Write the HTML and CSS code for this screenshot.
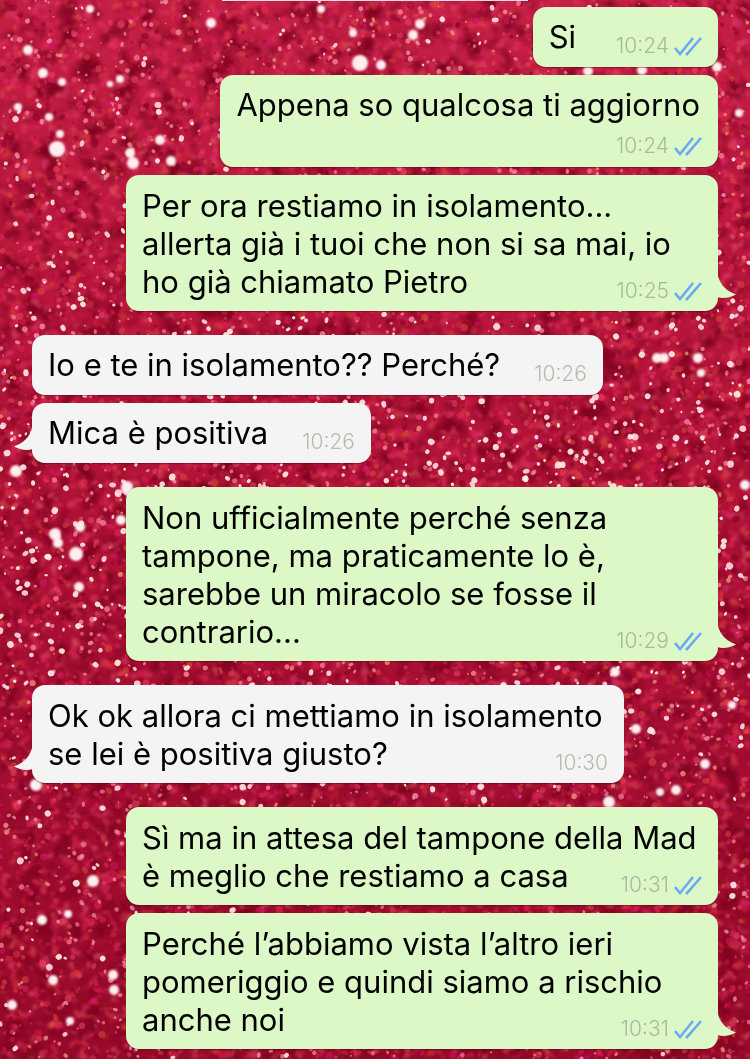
FILE: index.html
```html
<!DOCTYPE html>
<html lang="it">
<head>
   <meta charset="UTF-8">
   <meta name="viewport" content="width=device-width, initial-scale=1">
   <title>Chat</title>
   <link rel="stylesheet" href="styles.css">
</head>
<body>

   <!-- Glitter wallpaper -->
   <svg class="wallpaper" viewBox="0 0 750 1059" preserveAspectRatio="xMidYMid slice" aria-hidden="true">
      <defs>
         <linearGradient id="base" x1="0" y1="0" x2="0" y2="1">
            <stop offset="0" stop-color="#c41f45"/>
            <stop offset="0.3" stop-color="#b8163b"/>
            <stop offset="0.65" stop-color="#a80f33"/>
            <stop offset="1" stop-color="#980a2a"/>
         </linearGradient>
         <filter id="dark" x="0" y="0" width="100%" height="100%" color-interpolation-filters="sRGB">
            <feTurbulence type="fractalNoise" baseFrequency="0.05" numOctaves="3" seed="4"/>
            <feColorMatrix values="0 0 0 0 0.5  0 0 0 0 0.01  0 0 0 0 0.12  3 0 0 0 -1.3"/>
            <feGaussianBlur stdDeviation="1.5"/>
         </filter>
         <filter id="red" x="0" y="0" width="100%" height="100%" color-interpolation-filters="sRGB">
            <feTurbulence type="fractalNoise" baseFrequency="0.1" numOctaves="2" seed="11"/>
            <feColorMatrix values="0 0 0 0 0.93  0 0.5 0 0 0.02  0 0 0.7 0 0.04  5 0 0 0 -2.6"/>
            <feGaussianBlur stdDeviation="1.2"/>
         </filter>
         <filter id="soft" x="-20%" y="-20%" width="140%" height="140%"><feGaussianBlur stdDeviation="1"/></filter>
         <filter id="grain" x="0" y="0" width="100%" height="100%"><feGaussianBlur stdDeviation="0.6"/></filter>
      </defs>
      <rect width="750" height="1059" fill="url(#base)"/>
      <rect width="750" height="1059" filter="url(#dark)"/>
      <rect width="750" height="1059" filter="url(#red)" opacity="0.5"/>
      <!-- Small grains, filled in by glitter.js -->
      <g id="grains" filter="url(#grain)"></g>
      <!-- Larger sparkles -->
      <g fill="#ffeef0" filter="url(#soft)">
         <circle cx="57" cy="149" r="8"/><circle cx="60" cy="134" r="4"/><circle cx="43" cy="73" r="5"/>
         <circle cx="62" cy="82" r="4"/><circle cx="28" cy="50" r="5"/><circle cx="90" cy="9" r="4"/>
         <circle cx="49" cy="117" r="4"/><circle cx="18" cy="107" r="4"/><circle cx="130" cy="153" r="5"/>
         <circle cx="133" cy="163" r="6"/><circle cx="160" cy="140" r="5"/><circle cx="171" cy="161" r="5"/>
         <circle cx="110" cy="84" r="3"/><circle cx="120" cy="79" r="4"/><circle cx="211" cy="23" r="5"/>
         <circle cx="360" cy="63" r="8"/><circle cx="381" cy="65" r="5"/><circle cx="413" cy="35" r="5"/>
         <circle cx="420" cy="24" r="5"/><circle cx="353" cy="33" r="4"/><circle cx="321" cy="9" r="4"/>
         <circle cx="717" cy="67" r="5"/><circle cx="739" cy="113" r="4"/><circle cx="642" cy="70" r="5"/>
         <circle cx="588" cy="71" r="5"/><circle cx="55" cy="534" r="6"/><circle cx="58" cy="543" r="5"/>
         <circle cx="76" cy="554" r="7"/><circle cx="80" cy="527" r="5"/><circle cx="121" cy="520" r="5"/>
         <circle cx="16" cy="471" r="6"/><circle cx="127" cy="487" r="6"/><circle cx="79" cy="587" r="5"/>
         <circle cx="657" cy="358" r="5"/><circle cx="664" cy="358" r="5"/><circle cx="698" cy="358" r="5"/>
         <circle cx="701" cy="373" r="4"/><circle cx="745" cy="485" r="5"/><circle cx="36" cy="785" r="6"/>
         <circle cx="636" cy="729" r="5"/><circle cx="705" cy="764" r="5"/><circle cx="676" cy="790" r="5"/>
         <circle cx="660" cy="792" r="4"/><circle cx="609" cy="802" r="6"/><circle cx="732" cy="705" r="4"/>
         <circle cx="93" cy="881" r="6"/><circle cx="68" cy="914" r="4"/><circle cx="42" cy="920" r="5"/>
         <circle cx="113" cy="975" r="5"/><circle cx="114" cy="990" r="5"/><circle cx="53" cy="980" r="5"/>
         <circle cx="12" cy="1005" r="5"/><circle cx="70" cy="1021" r="4"/><circle cx="615" cy="672" r="5"/>
      </g>
   </svg>

   <!-- Shared shapes -->
   <svg class="shapes" aria-hidden="true">
      <symbol id="ticks" viewBox="0 0 28 19">
         <path d="M1 11l5 6L19 1M12 16l1 1L27 1" fill="none" stroke="#6aa9f4" stroke-width="2.6"/>
      </symbol>
      <symbol id="tail" viewBox="0 0 19 30">
         <path d="M0 0c1 12 7 20 18 24c1 1 1 1 0 1c-6 3-12 4-18 2z"/>
      </symbol>
   </svg>

   <main class="chat">
      <div class="date-pill"></div>

      <div class="message sent">
         <p>Si</p>
         <div class="meta"><time>10:24</time><svg class="ticks"><use href="#ticks"/></svg></div>
      </div>
      <div class="message sent stacked">
         <p>Appena so qualcosa ti aggiorno</p>
         <div class="meta"><time>10:24</time><svg class="ticks"><use href="#ticks"/></svg></div>
      </div>
      <div class="message sent long last">
         <p>Per ora restiamo in isolamento...<br>allerta già i tuoi che non si sa mai, io<br>ho già chiamato Pietro</p>
         <div class="meta"><time>10:25</time><svg class="ticks"><use href="#ticks"/></svg></div>
         <svg class="tail"><use href="#tail"/></svg>
      </div>

      <div class="message received">
         <p>Io e te in isolamento?? Perché?</p>
         <div class="meta"><time>10:26</time></div>
      </div>
      <div class="message received last">
         <p>Mica è positiva</p>
         <div class="meta"><time>10:26</time></div>
         <svg class="tail"><use href="#tail"/></svg>
      </div>

      <div class="message sent long last">
         <p>Non ufficialmente perché senza<br>tampone, ma praticamente lo è,<br>sarebbe un miracolo se fosse il<br>contrario...</p>
         <div class="meta"><time>10:29</time><svg class="ticks"><use href="#ticks"/></svg></div>
         <svg class="tail"><use href="#tail"/></svg>
      </div>

      <div class="message received long last">
         <p>Ok ok allora ci mettiamo in isolamento<br>se lei è positiva giusto?</p>
         <div class="meta"><time>10:30</time></div>
         <svg class="tail"><use href="#tail"/></svg>
      </div>

      <div class="message sent long">
         <p>Sì ma in attesa del tampone della Mad<br>è meglio che restiamo a casa</p>
         <div class="meta"><time>10:31</time><svg class="ticks"><use href="#ticks"/></svg></div>
      </div>
      <div class="message sent long last">
         <p>Perché l’abbiamo vista l’altro ieri<br>pomeriggio e quindi siamo a rischio<br>anche noi</p>
         <div class="meta"><time>10:31</time><svg class="ticks"><use href="#ticks"/></svg></div>
         <svg class="tail"><use href="#tail"/></svg>
      </div>
   </main>

   <script src="glitter.js"></script>
</body>
</html>
```
FILE: styles.css
```css
* {
   margin: 0;
   padding: 0;
   box-sizing: border-box;
}

body {
   background: #b01238;
   font-family: Inter, "Liberation Sans", sans-serif;
   min-height: 100vh;
}

/* Wallpaper behind the messages */
.wallpaper {
   position: fixed;
   top: 0;
   left: 0;
   width: 100%;
   height: 100%;
   z-index: -1;
}

.shapes {
   display: none;
}

/* Message list */
.chat {
   display: flex;
   flex-direction: column;
   gap: 8px;
   padding: 0 32px 10px;
}

/* Bottom edge of the date pill, scrolled out of view */
.date-pill {
   align-self: center;
   width: 306px;
   height: 1px;
   margin-bottom: -2px;
   background: #ead9e6;
}

/* Bubbles */
.message {
   position: relative;
   display: flex;
   justify-content: space-between;
   gap: 40px;
   padding: 11px 16px;
   border-radius: 13px;
   box-shadow: 0 1px 1px rgba(60, 0, 15, 0.4);
}

.message p {
   font-size: 31px;
   line-height: 38px;
   color: #000;
   white-space: nowrap;
}

.sent {
   align-self: flex-end;
   background: #dcf8c6;
   fill: #dcf8c6;
}

.received {
   align-self: flex-start;
   gap: 34px;
   background: #f4f4f4;
   fill: #f4f4f4;
}

/* Last bubble of a run carries the tail */
.last {
   margin-bottom: 16px;
}

.last:last-child {
   margin-bottom: 0;
}

/* Text and time share one cell, time in the corner */
.long {
   display: grid;
   grid-template-columns: 1fr;
   width: calc(100% - 94px);
   padding: 12px 16px 10px;
}

.long p,
.long .meta {
   grid-area: 1 / 1;
}

.long .meta {
   justify-self: end;
}

/* Time on a line of its own */
.stacked {
   flex-direction: column;
   gap: 10px;
}

.stacked p {
   padding-right: 2px;
}

/* Time and read ticks */
.meta {
   display: flex;
   align-self: flex-end;
   align-items: center;
   gap: 5px;
   height: 24px;
   margin-bottom: -2px;
   font-size: 21px;
   font-weight: 300;
   line-height: 24px;
   color: #a9b89e;
}

.received .meta {
   color: #b4bcae;
}

.ticks {
   width: 28px;
   height: 19px;
}

.tail {
   position: absolute;
   right: -18px;
   bottom: 11px;
   width: 19px;
   height: 30px;
}

.received .tail {
   right: auto;
   left: -18px;
   transform: scaleX(-1);
}
```
FILE: glitter.js
```js
// Scatter the small glitter grains over the wallpaper
const grains = document.getElementById("grains");
const WIDTH = 750;
const HEIGHT = 1059;

// Fixed seed so the wallpaper is the same on every load
let seed = 77;
function random() {
   seed = (seed * 16807) % 2147483647;
   return seed / 2147483647;
}

function addGrain(x, y, size, color, opacity) {
   const grain = document.createElementNS("http://www.w3.org/2000/svg", "ellipse");
   grain.setAttribute("cx", x);
   grain.setAttribute("cy", y);
   grain.setAttribute("rx", size);
   grain.setAttribute("ry", size * (0.6 + random() * 0.5));
   grain.setAttribute("fill", color);
   grain.setAttribute("opacity", opacity);
   grain.setAttribute("transform", `rotate(${random() * 180} ${x} ${y})`);
   grains.appendChild(grain);
}

const reds = ["#e8295a", "#ee4a6c", "#d8204a", "#e0503f", "#d81b68", "#7f0523", "#8a0a2c"];
const pinks = ["#ff8da4", "#f77f95", "#f7a08c", "#ff9fc0"];
const whites = ["#ffe9ec", "#ffd9e2", "#fff3e0"];

for (let i = 0; i < 6500; i++) {
   addGrain(random() * WIDTH, random() * HEIGHT, 1.2 + random() * 2.6, reds[Math.floor(random() * reds.length)], 0.5);
}
for (let i = 0; i < 2200; i++) {
   addGrain(random() * WIDTH, random() * HEIGHT, 1 + random() * 1.9, pinks[Math.floor(random() * pinks.length)], 0.7);
}
// Bright grains are denser around the middle
for (let i = 0; i < 2800; i++) {
   const x = random() * WIDTH;
   const y = random() * HEIGHT;
   const density = 0.12 + 0.88 * Math.exp(-Math.pow((y - 500) / 220, 2));
   if (random() < density) {
      addGrain(x, y, 1.3 + random() * 2.2, whites[Math.floor(random() * whites.length)], 0.9);
   }
}
```
